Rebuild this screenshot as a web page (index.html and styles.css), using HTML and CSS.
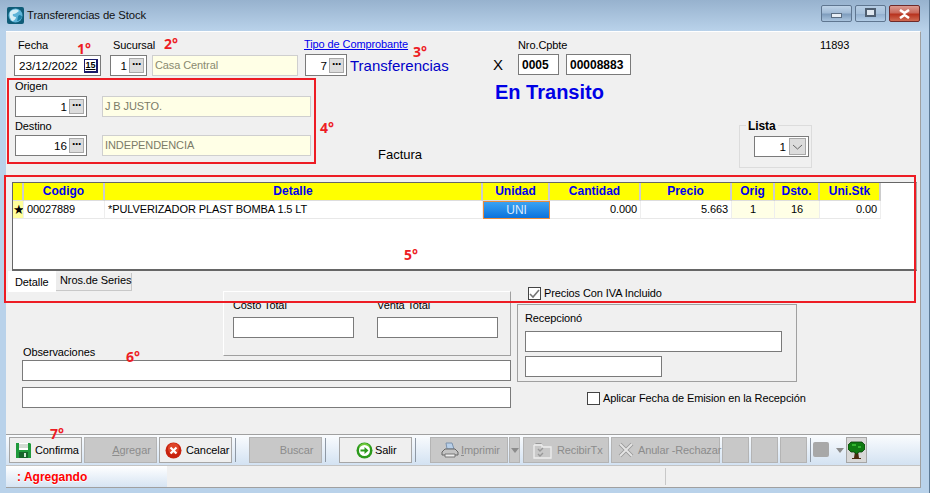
FILE: index.html
```html
<!doctype html>
<html>

<head>
    <meta charset="UTF-8">
    <title>Transferencias de Stock</title>
    <link rel="stylesheet" href="styles.css">
</head>

<body>
    <div class="window">

        <div class="titlebar">
            <svg class="appicon" width="17" height="17" viewBox="0 0 17 17">
                <rect width="17" height="17" rx="2" fill="#0f5c78"/>
                <circle cx="8.5" cy="8.5" r="7" fill="#5fb4d8"/>
                <path d="M3 5c3-3 7-3 9-1-2 1-3 3-6 3-1 2 1 3 3 3 0 2-2 4-4 4C3 12 2 8 3 5z" fill="#d8eef6"/>
                <path d="M12 8c2 0 3 1 3 2-1 2-3 4-5 4 1-2 0-4 2-6z" fill="#1d7fa6"/>
            </svg>
            <span class="title">Transferencias de Stock</span>
            <div class="winbtns">
                <div class="winbtn"><span class="glyph-min"></span></div>
                <div class="winbtn"><span class="glyph-max"></span></div>
                <div class="winbtn close">
                    <svg width="15" height="10" viewBox="0 0 15 10"><path d="M3 1l4.500 3L12 1M3 9l4.500-3L12 9" fill="none" stroke="#fff" stroke-width="2.600"/></svg>
                </div>
            </div>
        </div>

        <div class="client">
            <div class="form">

                <div class="head">
                    <div class="col-a">
                        <div class="row">
                            <div class="field fecha">
                                <label>Fecha</label>
                                <div class="input w87">23/12/2022
                                    <span class="cal">15</span>
                                </div>
                            </div>
                            <div class="field sucursal">
                                <label>Sucursal</label>
                                <div class="input num w37">1<span class="dots">···</span></div>
                            </div>
                            <div class="readonly casa">Casa Central</div>
                        </div>
                        <div class="places">
                            <label>Origen</label>
                            <div class="row">
                                <div class="input num w72">1<span class="dots">···</span></div>
                                <div class="readonly place">J B JUSTO.</div>
                            </div>
                            <label class="destino">Destino</label>
                            <div class="row">
                                <div class="input num w72">16<span class="dots">···</span></div>
                                <div class="readonly place">INDEPENDENCIA</div>
                            </div>
                        </div>
                    </div>

                    <div class="col-b">
                        <a class="link">Tipo de Comprobante</a>
                        <div class="row tipo">
                            <div class="input num w42">7<span class="dots">···</span></div>
                            <span class="tipo-name">Transferencias</span>
                        </div>
                        <div class="factura">Factura</div>
                    </div>

                    <div class="col-c">
                        <div class="row">
                            <span class="letra">X</span>
                            <div class="field">
                                <label class="nro">Nro.Cpbte</label>
                                <div class="row nro-boxes">
                                    <div class="input bold w41">0005</div>
                                    <div class="input bold w65">00008883</div>
                                </div>
                            </div>
                        </div>
                        <div class="estado">En Transito</div>
                    </div>

                    <div class="col-d">
                        <div class="numero">11893</div>
                        <div class="lista">
                            <span class="legend">Lista</span>
                            <div class="input num w55">1<span class="combo"><svg width="11" height="6" viewBox="0 0 11 6"><path d="M1 1l4.500 4L10 1" fill="none" stroke="#666"/></svg></span></div>
                        </div>
                    </div>
                </div>

                <div class="grid">
                    <div class="gh"></div>
                    <div class="gh">Codigo</div>
                    <div class="gh">Detalle</div>
                    <div class="gh">Unidad</div>
                    <div class="gh">Cantidad</div>
                    <div class="gh">Precio</div>
                    <div class="gh">Orig</div>
                    <div class="gh">Dsto.</div>
                    <div class="gh">Uni.Stk</div>

                    <div class="gc ind">★</div>
                    <div class="gc">00027889</div>
                    <div class="gc">*PULVERIZADOR PLAST BOMBA 1.5 LT</div>
                    <div class="gc uni">UNI</div>
                    <div class="gc right">0.000</div>
                    <div class="gc right">5.663</div>
                    <div class="gc mid">1</div>
                    <div class="gc mid">16</div>
                    <div class="gc right">0.00</div>
                </div>

                <div class="tabs">
                    <div class="tab on">Detalle</div>
                    <div class="tab">Nros.de Series</div>
                </div>

                <div class="lower">
                    <div class="lower-left">
                        <div class="totales">
                            <div class="total">
                                <label>Costo Total</label>
                                <div class="input w121"></div>
                            </div>
                            <div class="total">
                                <label>Venta Total</label>
                                <div class="input w121"></div>
                            </div>
                        </div>
                        <label class="obs">Observaciones</label>
                        <div class="input wide"></div>
                        <div class="input wide second"></div>
                    </div>
                    <div class="lower-right">
                        <div class="check iva">
                            <span class="box"><svg width="11" height="10" viewBox="0 0 11 10"><path d="M1 5l3 3 6-7" fill="none" stroke="#777" stroke-width="1.600"/></svg></span>
                            Precios Con IVA Incluido
                        </div>
                        <div class="recepcion">
                            <label>Recepcionó</label>
                            <div class="input w257"></div>
                            <div class="input w137"></div>
                        </div>
                        <div class="check aplicar">
                            <span class="box"></span>
                            Aplicar Fecha de Emision en la Recepción
                        </div>
                    </div>
                </div>

            </div>

            <div class="toolbar">
                <div class="btn b73">
                    <svg width="15" height="16" viewBox="0 0 15 16">
                        <path d="M0 1h14l1 1v14H0z" fill="#1f9a3c"/>
                        <path d="M3 1h9v7H3z" fill="#fff"/>
                        <path d="M3 3h9M3 5h9" stroke="#a8b8a8"/>
                        <path d="M3 10h9v6H3z" fill="#15652a"/>
                        <path d="M8 11h2v4H8z" fill="#cfe8d4"/>
                    </svg>
                    <span>Confirma</span>
                </div>
                <div class="btn off b73 noicon"><span><u>A</u>gregar</span></div>
                <div class="btn b73 cancel">
                    <svg width="17" height="17" viewBox="0 0 17 17">
                        <circle cx="8.500" cy="8.500" r="8" fill="#c8230f"/>
                        <circle cx="8.500" cy="6.500" r="5.500" fill="#ec5a3a" opacity=".6"/>
                        <path d="M5.500 5.500l6 6M11.500 5.500l-6 6" stroke="#fff" stroke-width="2.200"/>
                    </svg>
                    <span>Cancelar</span>
                </div>
                <i class="sep"></i>
                <div class="btn off b73 noicon m13"><span>Buscar</span></div>
                <i class="sep"></i>
                <div class="btn b73 salir m13">
                    <svg width="17" height="17" viewBox="0 0 17 17">
                        <circle cx="8.500" cy="8.500" r="8" fill="#2c9a1c"/>
                        <circle cx="8.500" cy="6.500" r="5.500" fill="#8fdc4a" opacity=".7"/>
                        <circle cx="8.500" cy="8.500" r="5.500" fill="#fff"/>
                        <path d="M4.500 7.500h4v-2.500l4 3.500-4 3.500v-2.500h-4z" fill="#2c9a1c"/>
                    </svg>
                    <span>Salir</span>
                </div>
                <i class="sep"></i>
                <div class="btn off b78 m14 imprimir">
                    <svg width="18" height="17" viewBox="0 0 18 17">
                        <path d="M5 1h6l2 6H6z" fill="#b8cfe8" stroke="#7d93ad"/>
                        <path d="M1 10l3-3h10l3 3v3H1z" fill="#c4c4c4" stroke="#666"/>
                        <path d="M4 12h10v3H4z" fill="#eee" stroke="#777"/>
                    </svg>
                    <span><u>I</u>mprimir</span>
                </div>
                <div class="btn off arrow"><i class="tri"></i></div>
                <div class="btn off b86 recibir">
                    <svg width="19" height="17" viewBox="0 0 19 17">
                        <path d="M1 3h8M1 3v13h17V5H9V3" fill="none" stroke="#eee" stroke-width="1.300"/>
                        <path d="M2.500 1.500h6" stroke="#999"/>
                        <path d="M5 7l2 2 3-3M5 12l2 2 3-3" fill="none" stroke="#999" stroke-width="1.400"/>
                    </svg>
                    <span>RecibirTx</span>
                </div>
                <div class="btn off b109">
                    <svg width="16" height="16" viewBox="0 0 16 16"><path d="M2 2l12 12M14 2L2 14" stroke="#999" stroke-width="3.800"/><path d="M2 2l12 12M14 2L2 14" stroke="#e4e4e4" stroke-width="2"/></svg>
                    <span>Anular -Rechazar</span>
                </div>
                <div class="btn off blank"></div>
                <div class="btn off blank"></div>
                <div class="btn off blank"></div>
                <i class="sep"></i>
                <span class="swatch"></span>
                <i class="tri small"></i>
                <div class="btn tree">
                    <svg width="17" height="20" viewBox="0 0 17 20">
                        <path d="M7 11h3l1 7h2v1H4v-1h2z" fill="#4a2c10"/>
                        <path d="M3 2h11l3 3v4l-3 3H11L8.500 14 6 12H3L0 9V5z" fill="#0f7a12" stroke="#063f08" stroke-width=".8"/>
                        <path d="M4 4h4v2H4zM10 6h3v2h-3z" fill="#32b52f"/>
                    </svg>
                </div>
            </div>

            <div class="status">
                <div class="status-a">: Agregando</div>
                <div class="status-b"></div>
                <div class="status-c"></div>
            </div>

            <div class="note box-places"></div>
            <div class="note box-grid"></div>
            <span class="num-note n1">1°</span>
            <span class="num-note n2">2°</span>
            <span class="num-note n3">3°</span>
            <span class="num-note n4">4°</span>
            <span class="num-note n5">5°</span>
            <span class="num-note n6">6°</span>
            <span class="num-note n7">7°</span>
        </div>

    </div>
</body>

</html>
```

FILE: styles.css
```css
* {
    margin: 0;
    padding: 0;
    box-sizing: border-box;
}

body {
    width: 930px;
    height: 493px;
    overflow: hidden;
    font-family: "Liberation Sans", Arial, sans-serif;
    font-size: 11px;
    letter-spacing: -0.1px;
    color: #000;
}

label {
    display: block;
    line-height: 13px;
    white-space: nowrap;
}

svg {
    flex-shrink: 0;
}

.window {
    width: 930px;
    height: 493px;
    display: flex;
    flex-direction: column;
    padding: 1px 8px 5px 6px;
    background: linear-gradient(#97b2ce, #b9d2ea 31px);
    border-right: 1px solid #5d7a96;
}

/* title bar */
.titlebar {
    height: 30px;
    display: flex;
    align-items: center;
    flex-shrink: 0;
}

.appicon {
    margin: 0 3px 2px 1px;
}

.title {
    font-size: 11.3px;
    margin-bottom: 2px;
    color: #111;
}

.winbtns {
    margin-left: auto;
    margin-right: 1px;
    margin-bottom: 5px;
    display: flex;
    gap: 3px;
}

.winbtn {
    width: 31px;
    height: 17px;
    border: 1px solid #5f7690;
    border-radius: 2px;
    background: linear-gradient(#bed3e8, #a2bbd6 45%, #7f9dbd 55%, #aac4de);
    display: flex;
    align-items: center;
    justify-content: center;
}

.winbtn + .winbtn {
    background: linear-gradient(#b6cde4, #a6c0da 50%, #93b0cf 55%, #b3cde6);
}

.winbtn.close {
    border-color: #6e2a2a;
    background: linear-gradient(#dc9a90, #c9695c 45%, #b8331f 55%, #cf6a52);
}

.glyph-min {
    width: 11px;
    height: 5px;
    margin-top: 4px;
    background: #e8eef5;
    border: 1px solid #5a6c80;
}

.glyph-max {
    width: 11px;
    height: 9px;
    border: 2px solid #4e5e70;
    background: #dfe7ef;
    margin-bottom: 3px;
}

/* client area */
.client {
    position: relative;
    flex: 1;
    display: flex;
    flex-direction: column;
    background: #f0f0f0;
    border-top: 1px solid #fff;
    border-right: 1px solid #a0a0a0;
}

.form {
    flex: 1;
    min-height: 0;
}

.row {
    display: flex;
}

.input {
    height: 21px;
    background: #fff;
    border: 1px solid #7a7a7a;
    display: flex;
    align-items: center;
    padding: 0 4px;
    font-size: 11.7px;
    letter-spacing: 0;
    flex-shrink: 0;
}

.num {
    justify-content: flex-end;
    padding: 0 2px 0 0;
}

.bold {
    font-weight: bold;
    font-size: 12px;
    padding: 0 3px;
}

.w37 { width: 37px; }
.w41 { width: 41px; }
.w42 { width: 42px; height: 22px; }
.w55 { width: 55px; }
.w65 { width: 65px; }
.w72 { width: 72px; }
.w87 { width: 87px; justify-content: space-between; padding-right: 2px; }
.w121 { width: 121px; }
.w137 { width: 137px; }
.w257 { width: 257px; }

.dots {
    width: 15px;
    height: 15px;
    margin-left: 2px;
    background: #dcdcdc;
    border: 1px solid #a8a8a8;
    font-weight: bold;
    font-size: 12px;
    line-height: 11px;
    text-align: center;
    letter-spacing: -1px;
}

.cal {
    width: 14px;
    height: 14px;
    border: 1px solid #1a1a6a;
    border-right-width: 2px;
    border-bottom-width: 2px;
    font-size: 9px;
    font-weight: bold;
    line-height: 11px;
    text-align: center;
    text-decoration: underline;
}

.readonly {
    height: 21px;
    background: #ffffe6;
    border: 1px solid #cfcfcf;
    color: #7b7b68;
    padding: 0 2px 2px;
    display: flex;
    align-items: center;
    flex-shrink: 0;
}

/* top of the form */
.head {
    display: flex;
    height: 150px;
}

.col-a {
    width: 291px;
    margin-left: 8px;
    padding-top: 7px;
    flex-shrink: 0;
}

.field label {
    padding-left: 4px;
    margin-bottom: 3px;
}

.sucursal {
    width: 37px;
    margin-left: 9px;
}

.sucursal label {
    padding-left: 3px;
}

.casa {
    width: 146px;
    margin: 16px 0 0 5px;
    color: #8a8a70;
}

.places {
    margin: 4px 0 0 1px;
}

.places label {
    margin-bottom: 3px;
}

.places .destino {
    margin-top: 3px;
    margin-bottom: 2px;
}

.place {
    width: 209px;
    margin-left: 15px;
}

.col-b {
    width: 188px;
    padding-top: 6px;
    flex-shrink: 0;
}

.link {
    display: block;
    line-height: 13px;
    margin-left: -1px;
    color: #0000ee;
    text-decoration: underline;
}

.tipo {
    margin-top: 3px;
    align-items: center;
}

.tipo-name {
    margin-left: 3px;
    font-size: 15px;
    line-height: 15px;
    letter-spacing: 0;
    color: #0000c8;
}

.factura {
    margin: 71px 0 0 73px;
    font-size: 13px;
    letter-spacing: 0;
}

.col-c {
    width: 246px;
    padding-top: 7px;
    flex-shrink: 0;
}

.letra {
    width: 25px;
    margin-top: 17px;
    font-size: 15px;
    line-height: 18px;
}

.nro {
    padding-left: 0 !important;
    margin-bottom: 2px !important;
}

.nro-boxes {
    gap: 7px;
}

.estado {
    margin: 6px 0 0 2px;
    font-size: 20px;
    letter-spacing: 0;
    font-weight: bold;
    color: #0000e6;
}

.col-d {
    padding-top: 7px;
}

.numero {
    margin-left: 81px;
    line-height: 13px;
}

.lista {
    position: relative;
    width: 73px;
    height: 43px;
    margin-top: 73px;
    border: 1px solid #dcdcdc;
    padding: 10px 0 0 14px;
}

.legend {
    position: absolute;
    left: 6px;
    top: -6px;
    padding: 0 2px;
    background: #f0f0f0;
    font-weight: bold;
    font-size: 12px;
    line-height: 13px;
}

.combo {
    width: 17px;
    height: 17px;
    margin-left: 3px;
    background: #dcdcdc;
    border: 1px solid #a8a8a8;
    display: flex;
    align-items: center;
    justify-content: center;
}

/* items grid */
.grid {
    width: 905px;
    height: 89px;
    margin-left: 6px;
    display: grid;
    grid-template-columns: 11px 81px 378px 67px 91px 91px 43px 45px 61px;
    grid-auto-rows: 18px;
    align-content: start;
    background: #fff;
    border: 1px solid #666;
    border-bottom-width: 2px;
    border-right-color: #aaa;
}

.gh {
    background: #ff0;
    color: #0000f0;
    font-weight: bold;
    font-size: 12px;
    letter-spacing: 0;
    line-height: 16px;
    text-align: center;
    border-right: 2px solid #ccc;
    border-bottom: 1px solid #ddd;
}

.gc {
    line-height: 17px;
    padding: 0 3px;
    border-right: 1px solid #eee;
    border-bottom: 1px solid #e8e8e8;
    white-space: nowrap;
    overflow: hidden;
}

.ind {
    background: #ffff9c;
    padding: 0;
    text-align: center;
    font-size: 13px;
}

.uni {
    background: linear-gradient(#3ba2f2, #0b72dc);
    border: 1px solid #e88a3c;
    color: #dcecff;
    font-size: 12px;
    text-align: center;
}

.right {
    text-align: right;
    padding-right: 3px;
}

.mid {
    background: #ffffe6;
    text-align: center;
}

/* tabs */
.tabs {
    display: flex;
    height: 21px;
    margin-left: 2px;
    align-items: flex-start;
}

.tab {
    width: 76px;
    height: 18px;
    margin-top: 2px;
    padding: 0 0 0 4px;
    line-height: 15px;
    white-space: nowrap;
    border-right: 1px solid #c8c8c8;
    border-bottom: 1px solid #c8c8c8;
    background: #ececec;
}

.tab.on {
    height: 21px;
    width: 48px;
    margin-top: 0;
    padding: 4px 0 0 7px;
    background: #fff;
    border: 0;
}

/* lower part */
.lower {
    display: flex;
    margin: -5px 0 0 16px;
}

.lower-left {
    width: 489px;
    padding-top: 4px;
}

.totales {
    width: 288px;
    height: 65px;
    margin-left: 201px;
    display: flex;
    gap: 23px;
    padding: 7px 0 0 9px;
    border: 1px solid;
    border-color: #fff #a0a0a0 #a0a0a0 #fff;
}

.total label {
    margin-bottom: 5px;
}

.obs {
    margin: -10px 0 1px 1px;
}

.wide {
    width: 489px;
}

.second {
    margin-top: 6px;
}

.lower-right {
    margin-left: 6px;
}

.check {
    display: flex;
    align-items: center;
    gap: 3px;
    height: 13px;
    line-height: 13px;
    white-space: nowrap;
}

.box {
    width: 13px;
    height: 13px;
    border: 1px solid #444;
    background: #fff;
    display: flex;
    align-items: center;
    justify-content: center;
}

.iva {
    margin-left: 11px;
}

.recepcion {
    width: 280px;
    height: 78px;
    margin-top: 4px;
    padding: 7px 0 0 7px;
    border: 1px solid #a0a0a0;
}

.recepcion label {
    margin-bottom: 6px;
}

.recepcion .input + .input {
    margin-top: 4px;
}

.aplicar {
    margin: 10px 0 0 70px;
}

/* toolbar */
.toolbar {
    height: 31px;
    flex-shrink: 0;
    display: flex;
    align-items: flex-start;
    padding: 2px 0 0 3px;
    border-top: 1px solid #a0a0a0;
    background: linear-gradient(#fafcfe, #d3e2f2);
}

.btn {
    height: 26px;
    display: flex;
    align-items: center;
    gap: 4px;
    padding-left: 6px;
    margin-right: 2px;
    background: #efefef;
    border: 1px solid #a6a6a6;
    white-space: nowrap;
    flex-shrink: 0;
}

.off {
    background: #c8c8c8;
    border-color: #b4b4b4;
    color: #8c8c8c;
}

.noicon {
    justify-content: center;
    padding-left: 22px;
}

.b73 { width: 73px; }
.b78 { width: 78px; }
.b86 { width: 86px; }
.b109 { width: 109px; gap: 4px; letter-spacing: -0.15px; }

.cancel { padding-left: 5px; gap: 4px; }
.salir { padding-left: 16px; gap: 2px; }
.imprimir { gap: 2px; padding-left: 10px; margin-right: 1px; }
.recibir { margin-left: 1px; padding-left: 9px; gap: 5px; }

.m13 { margin-left: 13px; }
.m14 { margin-left: 14px; }

.arrow {
    width: 11px;
    padding: 0;
    justify-content: center;
}

.blank {
    width: 27px;
}

.sep {
    width: 1px;
    height: 24px;
    margin: 1px 0 0 1px;
    background: #8e98a4;
    flex-shrink: 0;
}

.tri {
    width: 0;
    height: 0;
    border: 4px solid transparent;
    border-top: 5px solid #8c8c8c;
    border-bottom: 0;
}

.tri.small {
    margin: 11px 2px 0 7px;
}

.swatch {
    width: 16px;
    height: 15px;
    margin: 5px 0 0 2px;
    background: #a8a8a8;
    border-radius: 2px;
}

.tree {
    width: 21px;
    padding: 0 0 0 1px;
    background: #d8d8d8;
}

/* status bar */
.status {
    height: 23px;
    flex-shrink: 0;
    display: flex;
    border-top: 1px solid #c4c4c4;
    border-bottom: 1px solid #a0a0a0;
}

.status-a {
    width: 161px;
    padding: 4px 0 0 11px;
    background: linear-gradient(#fff, #d6e4f3);
    color: #f00;
    font-weight: bold;
    font-size: 12px;
    letter-spacing: 0;
    text-shadow: 0 1px 1px #fff;
}

.status-b {
    width: 499px;
    border-right: 1px solid #c8c8c8;
    margin: 2px 0;
}

.status-c {
    flex: 1;
}

/* red marks drawn on top of the screenshot */
.note {
    position: absolute;
    border: 2px solid #ed1c24;
    pointer-events: none;
}

.box-places {
    left: 1px;
    top: 46px;
    width: 309px;
    height: 86px;
}

.box-grid {
    left: -2px;
    top: 143px;
    width: 912px;
    height: 128px;
}

.num-note {
    position: absolute;
    color: #ed1c24;
    font-family: "Open Sans", sans-serif;
    font-weight: bold;
    font-size: 14px;
    letter-spacing: 0;
    line-height: 13px;
}

.n1 { left: 71px; top: 10px; }
.n2 { left: 158px; top: 5px; }
.n3 { left: 407px; top: 13px; }
.n4 { left: 314px; top: 89px; }
.n5 { left: 398px; top: 216px; }
.n6 { left: 120px; top: 318px; }
.n7 { left: 44px; top: 395px; }
```
